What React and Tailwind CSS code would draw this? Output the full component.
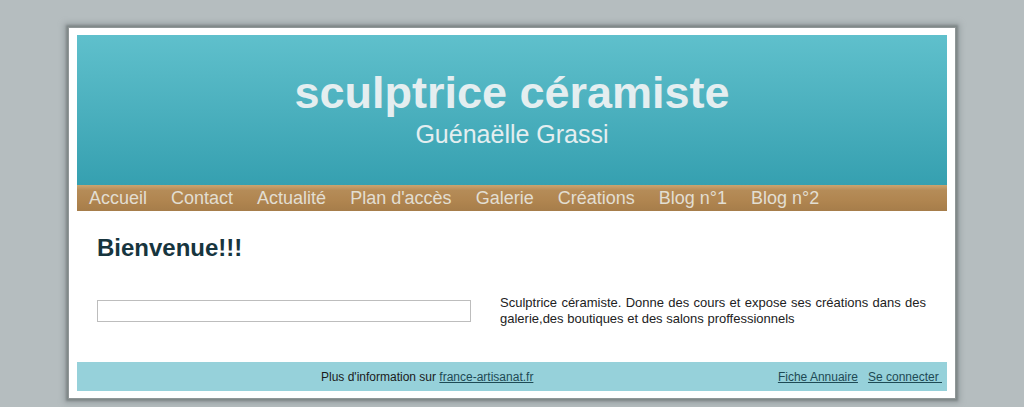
export default function App() {
  const nav = ["Accueil", "Contact", "Actualité", "Plan d'accès", "Galerie", "Créations", "Blog n°1", "Blog n°2"];
  return (
    <div className="min-h-[407px] bg-[#b5bdbf] pt-[28px] font-['Liberation_Sans',Arial,sans-serif]">
      <div className="mx-auto w-[886px] bg-white px-[8px] pt-[7px] pb-[7px] shadow-[0_0_0_1px_#8f9697,0_0_2px_3px_#7f8788,0_0_6px_5px_#9aa2a4]">
        <header className="flex h-[150px] flex-col items-center bg-gradient-to-b from-[#5fc0cc] to-[#35a0b0] pt-[29px]">
          <h1 className="text-[45px] font-bold leading-[58px] text-[#e4eef0]">sculptrice céramiste</h1>
          <div className="-mt-[3px] text-[25px] leading-[30px] text-[#e4eef0]">Guénaëlle Grassi</div>
        </header>
        <nav className="flex h-[26px] items-center gap-[24px] bg-[linear-gradient(to_bottom,#c9a470_0%,#b58c58_20%,#b08550_60%,#a67d4a_100%)] px-[12px]">
          {nav.map((n) => (
            <span key={n} className="text-[18px] leading-[26px] text-[#e2ded2]">{n}</span>
          ))}
        </nav>
        <main className="px-[20px] pt-[22px] pb-[35px]">
          <h2 className="text-[24px] font-bold leading-[30px] text-[#17353e]">Bienvenue!!!</h2>
          <div className="mt-[32px] flex items-start gap-[29px]">
            <div className="mt-[5px] h-[22px] w-[374px] border border-[#bdbdbd] bg-white"></div>
            <p className="w-[426px] text-justify text-[13px] leading-[16px] text-[#222]">
              Sculptrice céramiste. Donne des cours et expose ses créations dans des galerie,des boutiques et des salons proffessionnels
            </p>
          </div>
        </main>
        <footer className="flex h-[29px] items-center bg-[#96d1da] text-[12px] text-[#1b1b1b]">
          <div className="pl-[244px]">
            Plus d'information sur <a className="text-[#1e4a55] underline">france-artisanat.fr</a>
          </div>
          <div className="ml-auto flex gap-[10px] pr-[5px]">
            <a className="text-[#1e4a55] underline">Fiche Annuaire</a>
            <a className="text-[#1e4a55] underline">Se connecter&nbsp;</a>
          </div>
        </footer>
      </div>
    </div>
  );
}
